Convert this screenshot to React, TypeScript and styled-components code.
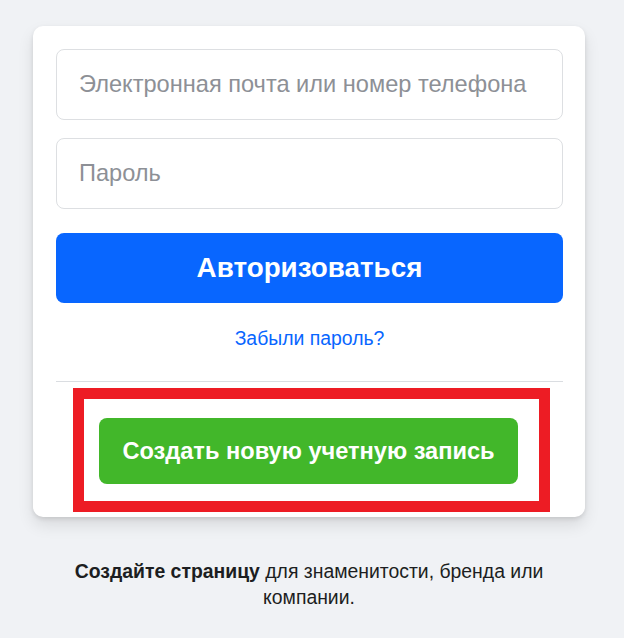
import styled, { createGlobalStyle } from "styled-components";

const GlobalStyle = createGlobalStyle`
  body {
    margin: 0;
    background-color: #f0f2f5;
    font-family: "Liberation Sans", Arial, sans-serif;
  }
`;

const Page = styled.div`
  width: 624px;
  min-height: 638px;
  box-sizing: border-box;
  padding: 26px 0 0 33px;
`;

const Column = styled.div`
  width: 552px;
  display: flex;
  flex-direction: column;
  align-items: center;
`;

const Card = styled.form`
  width: 100%;
  box-sizing: border-box;
  padding: 23px 22px 5px 23px;
  background-color: #fff;
  border-radius: 10px;
  box-shadow: 0 2px 4px rgba(0, 0, 0, 0.1), 0 8px 16px rgba(0, 0, 0, 0.1);
  display: flex;
  flex-direction: column;
`;

const Input = styled.input`
  height: 71px;
  box-sizing: border-box;
  padding: 0 22px;
  border: 1px solid #dddfe2;
  border-radius: 8px;
  font-family: inherit;
  font-size: 23.6px;
  color: #1c1e21;
  outline: none;
  & + & {
    margin-top: 18px;
  }
  &::placeholder {
    color: #8d9096;
  }
`;

const LoginButton = styled.button`
  margin-top: 24px;
  height: 70px;
  border: none;
  border-radius: 8px;
  background-color: #0866ff;
  color: #fff;
  font-family: inherit;
  font-size: 27.8px;
  font-weight: bold;
  cursor: pointer;
`;

const ForgotLink = styled.a`
  align-self: center;
  margin-top: 23px;
  font-size: 19.4px;
  line-height: 24px;
  color: #0866ff;
  text-decoration: none;
`;

const Divider = styled.hr`
  margin: 31px 0 0;
  border: none;
  border-top: 1px solid #dadde1;
`;

const Highlight = styled.div`
  align-self: flex-start;
  margin: 6px 0 0 17px;
  width: 477px;
  box-sizing: border-box;
  border: 11px solid #ed1c24;
  padding: 19px 21px 17px 15px;
  display: flex;
`;

const CreateButton = styled.button`
  width: 419px;
  height: 66px;
  border: none;
  border-radius: 8px;
  background-color: #42b72a;
  color: #fff;
  font-family: inherit;
  font-size: 23.6px;
  font-weight: bold;
  cursor: pointer;
`;

const Footer = styled.p`
  margin: 41px 0 0;
  width: 490px;
  text-align: center;
  font-size: 19.4px;
  line-height: 26px;
  color: #1c1e21;
  b {
    font-weight: bold;
  }
`;

export default function App() {
  return (
    <>
      <GlobalStyle />
      <Page>
        <Column>
          <Card onSubmit={(e) => e.preventDefault()}>
            <Input type="text" placeholder="Электронная почта или номер телефона" />
            <Input type="password" placeholder="Пароль" />
            <LoginButton type="submit">Авторизоваться</LoginButton>
            <ForgotLink href="#">Забыли пароль?</ForgotLink>
            <Divider />
            <Highlight>
              <CreateButton type="button">Создать новую учетную запись</CreateButton>
            </Highlight>
          </Card>
          <Footer>
            <b>Создайте страницу</b> для знаменитости, бренда или компании.
          </Footer>
        </Column>
      </Page>
    </>
  );
}
